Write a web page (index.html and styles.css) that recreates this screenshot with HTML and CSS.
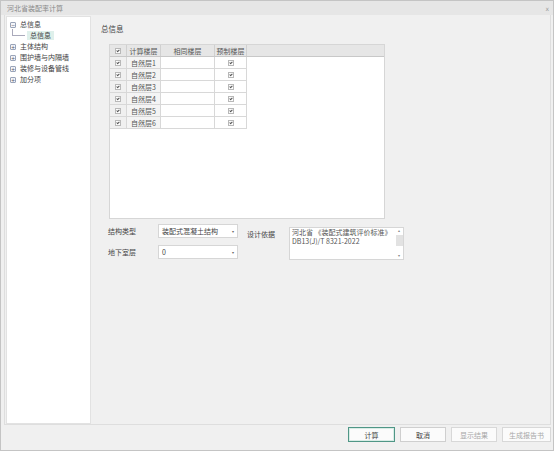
FILE: index.html
```html
<!DOCTYPE html>
<html lang="zh">
<head>
<meta charset="utf-8">
<title>河北省装配率计算</title>
<link rel="stylesheet" href="styles.css">
</head>
<body>
<div class="window">
  <div class="titlebar">
    <span class="title">河北省装配率计算</span>
    <span class="close">x</span>
  </div>
  <div class="main">
    <div class="tree">
      <div class="node"><span class="tg">−</span><span class="lbl">总信息</span></div>
      <div class="node child"><span class="elbow"></span><span class="lbl sel">总信息</span></div>
      <div class="node"><span class="tg">+</span><span class="lbl">主体结构</span></div>
      <div class="node"><span class="tg">+</span><span class="lbl">围护墙与内隔墙</span></div>
      <div class="node"><span class="tg">+</span><span class="lbl">装修与设备管线</span></div>
      <div class="node"><span class="tg">+</span><span class="lbl">加分项</span></div>
    </div>
    <div class="content">
      <div class="heading">总信息</div>
      <div class="gridbox">
        <div class="ghead">
          <div class="c c1"><span class="cb"></span></div>
          <div class="c c2">计算楼层</div>
          <div class="c c3">相同楼层</div>
          <div class="c c4">预制楼层</div>
        </div>
        <div class="grow"><div class="c c1"><span class="cb"></span></div><div class="c c2 l">自然层1</div><div class="c c3"></div><div class="c c4"><span class="cb"></span></div></div>
        <div class="grow"><div class="c c1"><span class="cb"></span></div><div class="c c2 l">自然层2</div><div class="c c3"></div><div class="c c4"><span class="cb"></span></div></div>
        <div class="grow"><div class="c c1"><span class="cb"></span></div><div class="c c2 l">自然层3</div><div class="c c3"></div><div class="c c4"><span class="cb"></span></div></div>
        <div class="grow"><div class="c c1"><span class="cb"></span></div><div class="c c2 l">自然层4</div><div class="c c3"></div><div class="c c4"><span class="cb"></span></div></div>
        <div class="grow"><div class="c c1"><span class="cb"></span></div><div class="c c2 l">自然层5</div><div class="c c3"></div><div class="c c4"><span class="cb"></span></div></div>
        <div class="grow"><div class="c c1"><span class="cb"></span></div><div class="c c2 l">自然层6</div><div class="c c3"></div><div class="c c4"><span class="cb"></span></div></div>
      </div>
      <div class="form">
        <div class="flabel r1">结构类型</div>
        <div class="select r1"><span>装配式混凝土结构</span><span class="arr">▾</span></div>
        <div class="flabel r2">地下室层</div>
        <div class="select r2"><span>0</span><span class="arr">▾</span></div>
        <div class="flabel basis">设计依据</div>
        <div class="textarea">
          <div class="ttext">
            <div>河北省 《装配式建筑评价标准》</div>
            <div>DB13(J)/T 8321-2022</div>
          </div>
          <div class="sbar">
            <span class="sa">▴</span>
            <span class="thumb"></span>
            <span class="sa">▾</span>
          </div>
        </div>
      </div>
    </div>
  </div>
  <div class="footer">
    <div class="btn primary">计算</div>
    <div class="btn">取消</div>
    <div class="btn disabled">显示结果</div>
    <div class="btn disabled wide">生成报告书</div>
  </div>
</div>
</body>
</html>
```
FILE: styles.css
```css
html, body {
  margin: 0;
  padding: 0;
}
body {
  width: 554px;
  height: 451px;
  font-family: "Noto Sans CJK SC", "Noto Sans", sans-serif;
  font-size: 7px;
  color: #444;
  background: #ffffff;
}
.window {
  box-sizing: border-box;
  width: 554px;
  height: 451px;
  border: 1px solid #c4c4c4;
  background: #f0f0f0;
  display: flex;
  flex-direction: column;
}
.titlebar {
  height: 14px;
  flex: none;
  background: #e6e6e6;
  display: flex;
  align-items: center;
  justify-content: space-between;
  padding: 0 4px 0 6px;
  color: #8a8a8a;
  font-size: 7px;
}
.close {
  font-family: "DejaVu Sans", sans-serif;
  font-size: 6px;
  color: #999;
}
.main {
  flex: none;
  height: 409px;
  margin: 0 2px 0 3px;
  border: 1px solid #dedede;
  border-top: 0;
  display: flex;
}
.tree {
  box-sizing: border-box;
  width: 85px;
  flex: none;
  background: #ffffff;
  border: 1px solid #e2e2e2;
  margin: 1px 0 0 1px;
  padding: 2px 0 0 3px;
}
.node {
  height: 11px;
  display: flex;
  align-items: center;
  white-space: nowrap;
}
.tg {
  box-sizing: border-box;
  width: 6px;
  height: 6px;
  border: 1px solid #9aa4b8;
  border-radius: 1px;
  background: #f4f6fa;
  font-family: "DejaVu Sans", sans-serif;
  font-size: 5px;
  line-height: 4px;
  text-align: center;
  color: #556;
  margin-right: 2px;
}
.lbl {
  color: #444;
  padding: 0 2px;
  line-height: 9px;
}
.child {
  padding-left: 2px;
}
.elbow {
  width: 13px;
  height: 7px;
  border-left: 1px solid #aab;
  border-bottom: 1px solid #aab;
  margin-top: -6px;
  margin-right: 2px;
  box-sizing: border-box;
}
.lbl.sel {
  background: #dff0eb;
  padding: 0 3px;
}
.content {
  flex: 1;
  padding: 9px 0 0 10px;
}
.heading {
  font-size: 7.5px;
  line-height: 10px;
  height: 10px;
  color: #444;
}
.gridbox {
  box-sizing: border-box;
  width: 276px;
  height: 175px;
  margin: 10px 0 0 8px;
  background: #ffffff;
  border: 1px solid #d6d6d6;
}
.ghead {
  display: flex;
  height: 11px;
  background: #e6e6e6;
  border-bottom: 1px solid #c8c8c8;
}
.grow {
  display: flex;
  height: 12px;
}
.c {
  box-sizing: border-box;
  display: flex;
  align-items: center;
  justify-content: center;
  border-right: 1px solid #d8d8d8;
  border-bottom: 1px solid #d8d8d8;
  color: #555;
  white-space: nowrap;
}
.ghead .c {
  border-bottom: 0;
  border-right-color: #d0d0d0;
}
.c1 { width: 17px; background: #f0f0f0; }
.ghead .c1 { background: #e6e6e6; }
.c2 { width: 34px; }
.grow .c2 { background: #f4f4f4; }
.c2.l { justify-content: flex-start; padding-left: 4px; }
.c3 { width: 54px; }
.c4 { width: 32px; }
.cb {
  box-sizing: border-box;
  width: 6px;
  height: 6px;
  border: 1px solid #b8b8b8;
  background: #fdfdfd;
  position: relative;
}
.cb::after {
  content: "";
  position: absolute;
  left: 1px;
  top: 0;
  width: 1px;
  height: 2px;
  border: solid #555;
  border-width: 0 1px 1px 0;
  transform: rotate(45deg);
}
.form {
  display: grid;
  grid-template-columns: 50px 80px 9px 42px 115px;
  grid-template-rows: 14px 14px;
  row-gap: 7px;
  margin: 5px 0 0 7px;
}
.flabel {
  display: flex;
  align-items: center;
  color: #444;
}
.flabel.r1 { grid-column: 1; grid-row: 1; }
.flabel.r2 { grid-column: 1; grid-row: 2; }
.select {
  box-sizing: border-box;
  background: #ffffff;
  border: 1px solid #d6d6d6;
  display: flex;
  align-items: center;
  justify-content: space-between;
  padding: 0 3px 0 3px;
  color: #444;
}
.select.r1 { grid-column: 2; grid-row: 1; }
.select.r2 { grid-column: 2; grid-row: 2; }
.arr {
  font-family: "DejaVu Sans", sans-serif;
  font-size: 4px;
  color: #666;
}
.flabel.basis {
  grid-column: 4;
  grid-row: 1;
  align-items: flex-start;
  padding-top: 5px;
}
.textarea {
  grid-column: 5;
  grid-row: 1 / span 2;
  box-sizing: border-box;
  height: 33px;
  margin-top: 3px;
  background: #ffffff;
  border: 1px solid #d6d6d6;
  display: flex;
}
.ttext {
  flex: 1;
  padding: 0 0 0 2px;
  line-height: 9px;
  color: #555;
  white-space: nowrap;
}
.sbar {
  width: 8px;
  flex: none;
  display: flex;
  flex-direction: column;
  align-items: center;
  background: #ffffff;
}
.sa {
  font-family: "DejaVu Sans", sans-serif;
  font-size: 4px;
  line-height: 6px;
  height: 6px;
  color: #888;
}
.thumb {
  width: 7px;
  flex: 1;
  background: #e2e2e2;
  margin: 1px 0 7px 0;
}
.footer {
  flex: 1;
  display: flex;
  justify-content: flex-end;
  align-items: flex-start;
  gap: 5px;
  padding: 2px 2px 0 0;
}
.btn {
  box-sizing: border-box;
  width: 46px;
  height: 15px;
  border: 1px solid #cfcfcf;
  background: #fbfbfb;
  display: flex;
  align-items: center;
  justify-content: center;
  color: #444;
}
.btn.primary {
  width: 47px;
  border: 1px solid #4f9686;
  box-shadow: inset 0 0 0 1px #d8ece6;
}
.btn.disabled {
  color: #a8a8a8;
  border-color: #d8d8d8;
}
.btn.wide { width: 49px; }
```
